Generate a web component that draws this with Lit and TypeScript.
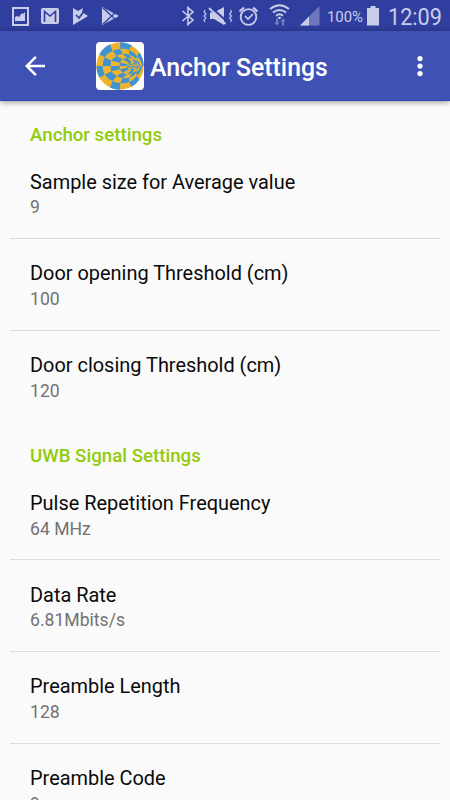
import { LitElement, html, css, svg } from "lit";
import { customElement } from "lit/decorators.js";

interface Setting { title: string; value: string; }
interface Group { name: string; items: Setting[]; }

const groups: Group[] = [
  { name: "Anchor settings", items: [
    { title: "Sample size for Average value", value: "9" },
    { title: "Door opening Threshold (cm)", value: "100" },
    { title: "Door closing Threshold (cm)", value: "120" },
  ] },
  { name: "UWB Signal Settings", items: [
    { title: "Pulse Repetition Frequency", value: "64 MHz" },
    { title: "Data Rate", value: "6.81Mbits/s" },
    { title: "Preamble Length", value: "128" },
    { title: "Preamble Code", value: "9" },
  ] },
];

// Upper half of the checkered disc: one list per ray, from the rim to the focus.
const RAYS: [number, number][][] = [
  [[1, 72], [20, 72], [44, 72], [71, 72], [92, 72], [120, 72]],
  [[10, 37], [26, 46], [46, 56], [72, 62], [94, 67], [120, 72]],
  [[42, 7], [50, 27], [62, 42], [80, 52], [100, 63], [120, 72]],
  [[72, 1], [73, 21], [80, 36], [94, 48], [109, 62], [121, 72]],
  [[107, 10], [99, 24], [100, 38], [108, 51], [117, 64], [121, 72]],
  [[130, 31], [123, 43], [121, 52], [122, 60], [122, 67], [122, 72]],
  [[143, 72], [138, 72], [133, 72], [129, 72], [125, 72], [122, 72]],
];
const RADII = [71, 51, 35, 24, 16, 9];

function checker(): string {
  let d = "";
  for (const lower of [false, true]) {
    const at = ([x, y]: [number, number]) => `${x} ${lower ? 144 - y : y}`;
    const arc = (r: number, sweep: boolean) => `A${r} ${r} 0 0 ${sweep !== lower ? 1 : 0} `;
    for (let j = 0; j < RAYS.length - 1; j++)
      for (let i = 0; i < RADII.length - 1; i++) {
        if ((i + j) % 2 === (lower ? 1 : 0)) continue;
        const a = RAYS[j], b = RAYS[j + 1];
        d += `M${at(a[i])}${arc(RADII[i], true)}${at(b[i])}L${at(b[i + 1])}${arc(RADII[i + 1], false)}${at(a[i + 1])}Z`;
      }
  }
  return d;
}

@customElement("status-bar")
class StatusBar extends LitElement {
  static styles = css`
    :host { display: block; height: 31px; background: #303f9f; color: #c9cde9; font-family: Roboto, sans-serif; }
    svg { display: block; width: 450px; height: 31px; }
    .pct { font-size: 14.5px; }
    .time { font-size: 23.5px; }
  `;
  render() {
    return html`<svg viewBox="0 0 450 31" fill="currentColor" stroke="none">
      ${svg`
      <path fill-rule="evenodd" d="M12 7h17v19H12zM14 9v15h13V9z"/>
      <path d="M15 21v-4l2-1 2 1 3-4 1 1 2-2v9z"/>
      <path fill-rule="evenodd" d="M43 8h14q2 0 2 2v12q0 2-2 2H43q-2 0-2-2V10q0-2 2-2z"/>
      <path d="M44.500 22v-10.500l5.500 4.500 5.500-4.500V22" fill="none" stroke="#303f9f" stroke-width="1.600"/>
      <path d="M73 8l5 3 5-3-1 4 6 4-15 9z"/>
      <path d="M76 15l3 3 6-8" fill="none" stroke="#303f9f" stroke-width="1.7"/>
      <path d="M102 7l17 9-17 9z"/>
      <path d="M103 8l12 11M103 24l12-11" stroke="#303f9f" stroke-width="1.3"/>
      <path d="M182.5 11l10.5 9-5 4.5v-17l5 4.5-10.5 9" fill="none" stroke="currentColor" stroke-width="1.6"/>
      <path d="M210 12.500h4l10-5.500v18l-10-6h-4z"/>
      <path d="M209.500 6l18 16" stroke="#303f9f" stroke-width="2"/>
      <path d="M209 8l16.500 16" stroke="currentColor" stroke-width="1.8"/>
      <path d="M205 10l-1 2 2 2-2 2 2 2-2 2 1 2M230.500 10l1 2-2 2 2 2-2 2 2 2-1 2" fill="none" stroke="currentColor" stroke-width="1.1"/>
      <circle cx="248.5" cy="17" r="7.8" fill="none" stroke="currentColor" stroke-width="1.8"/>
      <path d="M239.5 11.5l4.5-4M257.500 11.5l-4.500-4" stroke="currentColor" stroke-width="2.3"/>
      <path d="M245 16l3 3 5-5" fill="none" stroke="currentColor" stroke-width="1.7"/>
      <path d="M270 9q9.500-7.500 19 0M273 12.500q6.500-5 13 0M276 15.800q3.500-3 7 0" fill="none" stroke="currentColor" stroke-width="1.9"/>
      <path d="M277.500 17.500q2-1.500 4 0l-2 2z"/>
      <path opacity=".45" d="M276 18.500h2v4h1.700l-2.700 3-2.700-3h1.700zM282 25.500h2v-4h1.700l-2.700-3-2.700 3h1.700z"/>
      <path opacity=".4" d="M300 25.500L319.500 6v19.500z"/>
      <path d="M300 25.500l9-9v9z"/>
      <text class="pct" x="327" y="22" textLength="36" lengthAdjust="spacingAndGlyphs">100%</text>
      <path d="M370.500 6h5v2h3.500v17.500h-12V8h3.500z"/>
      <text class="time" x="388" y="25.300" textLength="54" lengthAdjust="spacingAndGlyphs">12:09</text>`}
    </svg>`;
  }
}

@customElement("app-bar")
class AppBar extends LitElement {
  static styles = css`
    :host { display: flex; align-items: center; height: 70px; box-sizing: border-box; background: #3f51b5; color: #fff; border-bottom: 1px solid #2847b7; box-shadow: 0 1px 6px rgba(0,0,0,.42); font-family: Roboto, sans-serif; position: relative; }
    .back { width: 30px; height: 30px; margin-left: 20px; }
    .logo { width: 48px; height: 48px; margin-left: 46px; }
    h1 { flex: 1; margin: 0 0 0 6px; padding-top: 4px; font-size: 24.850px; line-height: 30px; font-weight: 500; white-space: nowrap; }
    .more { width: 30px; height: 30px; margin-right: 15px; }
  `;
  render() {
    return html`
      <svg class="back" viewBox="0 0 24 24" fill="#fff"><path d="M20 11H7.830l5.590-5.590L12 4l-8 8 8 8 1.410-1.410L7.830 13H20v-2z"/></svg>
      <svg class="logo" viewBox="0 0 144 144">
        <rect width="144" height="144" rx="12" fill="#fff"/>
        <circle cx="72" cy="72" r="71" fill="#eeb42f"/>
        <path d=${checker()} fill="#3f94cf"/>
      </svg>
      <h1>Anchor Settings</h1>
      <svg class="more" viewBox="0 0 24 24" fill="#fff"><circle cx="12" cy="6" r="2.100"/><circle cx="12" cy="12" r="2.100"/><circle cx="12" cy="18" r="2.100"/></svg>`;
  }
}

@customElement("app-root")
class AppRoot extends LitElement {
  static styles = css`
    :host { display: block; height: 800px; overflow: hidden; background: #fafafa; font-family: Roboto, sans-serif; }
    h2 { margin: 0; box-sizing: border-box; height: 46.200px; padding: 23px 30px 0; font-size: 18.700px; line-height: 22px; font-weight: 500; color: #92cb0b; }
    .row { box-sizing: border-box; height: 91.700px; margin: 0 10px; padding: 23.400px 20px 0; border-bottom: 1px solid #dcdcdc; }
    .row.last { border-bottom-color: transparent; }
    .title { font-size: 19.930px; line-height: 24px; color: #0a0a0a; }
    .value { margin-top: 1.800px; font-size: 17.600px; line-height: 22px; color: #727272; }
  `;
  render() {
    return html`<status-bar></status-bar><app-bar></app-bar>
      <main>${groups.map(g => html`<section><h2>${g.name}</h2>
        ${g.items.map((s, i) => html`<div class="row ${i === g.items.length - 1 ? "last" : ""}">
          <div class="title">${s.title}</div><div class="value">${s.value}</div></div>`)}
      </section>`)}</main>`;
  }
}
